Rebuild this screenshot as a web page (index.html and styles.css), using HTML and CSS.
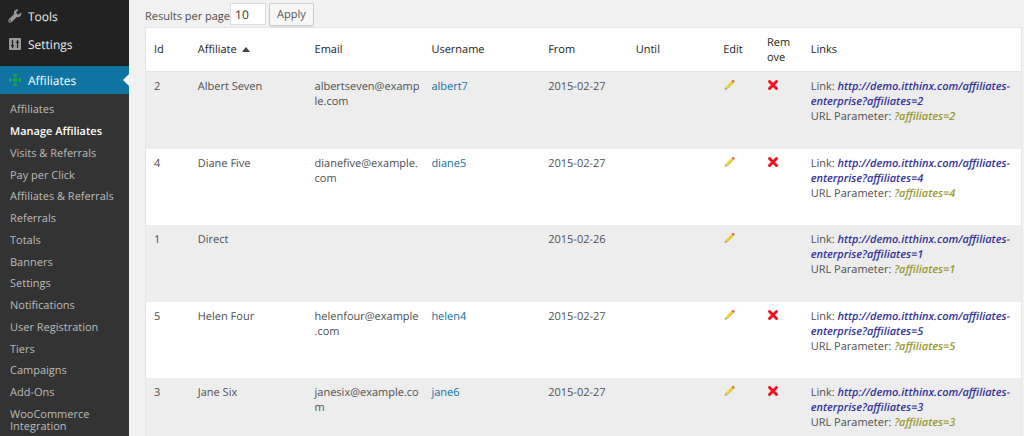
FILE: index.html
```html
<!DOCTYPE html>
<html lang="en">
<head>
    <meta charset="UTF-8">
    <meta name="viewport" content="width=device-width, initial-scale=1.0">
    <title>Manage Affiliates</title>
    <link rel="stylesheet" href="styles.css">
</head>
<body>
    <!-- shared icons -->
    <svg class="icon-defs" width="0" height="0" aria-hidden="true">
        <symbol id="icon-pencil" viewBox="0 0 12 12">
            <path d="M1.500 11l1-3 2 2z" fill="#a8a08c"/>
            <path d="M2.500 8l6-6 2 2-6 6z" fill="#ecd63a"/>
            <path d="M4 9.500l6-6 .5.500-6 6z" fill="#d9bd2c"/>
            <path d="M8.500 2l1-1h1l1 1v1l-1 1z" fill="#e8603c"/>
        </symbol>
        <symbol id="icon-remove" viewBox="0 0 12 12">
            <path d="M2.500 2.500l7 7M9.500 2.500l-7 7" stroke="#f5101f" stroke-width="3" stroke-linecap="round"/>
        </symbol>
    </svg>

    <div class="wrapper">
        <nav class="sidebar">
            <ul class="menu">
                <li>
                    <a href="#">
                        <svg class="menu-icon" viewBox="0 0 14 14"><path d="M13.200 3.300l-2.300 2.200-2-.5-.5-2L10.600.800C9.100.300 7.500.700 6.600 1.800c-.8 1-.9 2.200-.5 3.300L.900 10.300c-.8.800-.8 2 0 2.800s2 .8 2.800 0l5.200-5.200c1.100.4 2.400.2 3.300-.7 1.100-1 1.400-2.600 1-3.900zM2.300 12.500a.8.800 0 1 1 0-1.600.8.800 0 0 1 0 1.600z" fill="#999"/></svg>
                        Tools
                    </a>
                </li>
                <li>
                    <a href="#">
                        <svg class="menu-icon" viewBox="0 0 14 14"><rect x="1" y="1" width="12" height="12" rx="1" fill="#999"/><path d="M4.500 3v8M9.500 3v8" stroke="#222" stroke-width="1.200"/><path d="M2.500 8h4l-2 2.500zM7.500 6h4l-2-2.500z" fill="#222"/></svg>
                        Settings
                    </a>
                </li>
                <li class="current">
                    <a href="#">
                        <svg class="menu-icon" viewBox="0 0 14 14" fill="#16a34f"><rect x="5" y="5" width="4" height="4"/><path d="M5 1h4L8 4H6zM5 13h4l-1-3H6zM1 5l3 1v2L1 9zM13 5l-3 1v2l3 1z"/></svg>
                        Affiliates
                    </a>
                </li>
            </ul>
            <ul class="submenu">
                <li><a href="#">Affiliates</a></li>
                <li><a href="#" class="active">Manage Affiliates</a></li>
                <li><a href="#">Visits &amp; Referrals</a></li>
                <li><a href="#">Pay per Click</a></li>
                <li><a href="#">Affiliates &amp; Referrals</a></li>
                <li><a href="#">Referrals</a></li>
                <li><a href="#">Totals</a></li>
                <li><a href="#">Banners</a></li>
                <li><a href="#">Settings</a></li>
                <li><a href="#">Notifications</a></li>
                <li><a href="#">User Registration</a></li>
                <li><a href="#">Tiers</a></li>
                <li><a href="#">Campaigns</a></li>
                <li><a href="#">Add-Ons</a></li>
                <li><a href="#">WooCommerce Integration</a></li>
            </ul>
        </nav>

        <main class="content">
            <form class="per-page">
                <label for="row_count">Results per page</label>
                <input type="text" id="row_count" name="row_count" value="10">
                <button type="button">Apply</button>
            </form>

            <table class="affiliates">
                <thead>
                    <tr>
                        <th class="col-small">Id</th>
                        <th class="col-name">Affiliate <span class="sort-asc"></span></th>
                        <th class="col-name">Email</th>
                        <th class="col-name">Username</th>
                        <th class="col-date">From</th>
                        <th class="col-date">Until</th>
                        <th class="col-small">Edit</th>
                        <th class="col-small">Remove</th>
                        <th>Links</th>
                    </tr>
                </thead>
                <tbody>
                    <tr>
                        <td>2</td>
                        <td>Albert Seven</td>
                        <td>albertseven@example.com</td>
                        <td><a href="#">albert7</a></td>
                        <td>2015-02-27</td>
                        <td></td>
                        <td><a href="#" aria-label="Edit"><svg class="icon"><use href="#icon-pencil"/></svg></a></td>
                        <td><a href="#" aria-label="Remove"><svg class="icon"><use href="#icon-remove"/></svg></a></td>
                        <td>Link: <span class="link-url">http://demo.itthinx.com/affiliates-enterprise?affiliates=2</span><br>URL Parameter: <span class="link-param">?affiliates=2</span></td>
                    </tr>
                    <tr>
                        <td>4</td>
                        <td>Diane Five</td>
                        <td>dianefive@example.com</td>
                        <td><a href="#">diane5</a></td>
                        <td>2015-02-27</td>
                        <td></td>
                        <td><a href="#" aria-label="Edit"><svg class="icon"><use href="#icon-pencil"/></svg></a></td>
                        <td><a href="#" aria-label="Remove"><svg class="icon"><use href="#icon-remove"/></svg></a></td>
                        <td>Link: <span class="link-url">http://demo.itthinx.com/affiliates-enterprise?affiliates=4</span><br>URL Parameter: <span class="link-param">?affiliates=4</span></td>
                    </tr>
                    <tr>
                        <td>1</td>
                        <td>Direct</td>
                        <td></td>
                        <td></td>
                        <td>2015-02-26</td>
                        <td></td>
                        <td><a href="#" aria-label="Edit"><svg class="icon"><use href="#icon-pencil"/></svg></a></td>
                        <td></td>
                        <td>Link: <span class="link-url">http://demo.itthinx.com/affiliates-enterprise?affiliates=1</span><br>URL Parameter: <span class="link-param">?affiliates=1</span></td>
                    </tr>
                    <tr>
                        <td>5</td>
                        <td>Helen Four</td>
                        <td>helenfour@example.com</td>
                        <td><a href="#">helen4</a></td>
                        <td>2015-02-27</td>
                        <td></td>
                        <td><a href="#" aria-label="Edit"><svg class="icon"><use href="#icon-pencil"/></svg></a></td>
                        <td><a href="#" aria-label="Remove"><svg class="icon"><use href="#icon-remove"/></svg></a></td>
                        <td>Link: <span class="link-url">http://demo.itthinx.com/affiliates-enterprise?affiliates=5</span><br>URL Parameter: <span class="link-param">?affiliates=5</span></td>
                    </tr>
                    <tr>
                        <td>3</td>
                        <td>Jane Six</td>
                        <td>janesix@example.com</td>
                        <td><a href="#">jane6</a></td>
                        <td>2015-02-27</td>
                        <td></td>
                        <td><a href="#" aria-label="Edit"><svg class="icon"><use href="#icon-pencil"/></svg></a></td>
                        <td><a href="#" aria-label="Remove"><svg class="icon"><use href="#icon-remove"/></svg></a></td>
                        <td>Link: <span class="link-url">http://demo.itthinx.com/affiliates-enterprise?affiliates=3</span><br>URL Parameter: <span class="link-param">?affiliates=3</span></td>
                    </tr>
                </tbody>
            </table>
        </main>
    </div>
</body>
</html>
```

FILE: styles.css
```css
* {
    box-sizing: border-box;
}
body {
    margin: 0;
    font-family: "Open Sans", sans-serif;
    font-size: 11px;
    line-height: 15px;
    text-rendering: geometricPrecision;
    color: #4f4f4f;
    background: #f1f1f1;
    overflow-x: hidden;
    scrollbar-width: none;
}
.icon-defs {
    position: absolute;
}
.wrapper {
    display: flex;
    min-height: 100vh;
}

/* sidebar */
.sidebar {
    flex: none;
    width: 129px;
    background: #333;
}
.sidebar ul {
    list-style: none;
    margin: 0;
    padding: 0;
}
.sidebar a {
    text-decoration: none;
}
.sidebar .menu {
    background: #222;
    padding-top: 2px;
}
.menu a {
    display: flex;
    align-items: center;
    gap: 6px;
    height: 28px;
    padding-left: 8px;
    font-size: 12px;
    color: #eee;
}
.menu-icon {
    width: 14px;
    height: 14px;
}
.menu .current {
    position: relative;
    margin-top: 8px;
    background: #0f74a2;
}
.menu .current a {
    color: #fff;
}
/* arrow pointing at the menu from the content side */
.menu .current::after {
    content: "";
    position: absolute;
    right: 0;
    top: 8px;
    border: 6px solid transparent;
    border-left: 0;
    border-right-color: #f1f1f1;
}
.sidebar .submenu {
    padding: 5px 0;
}
.submenu li {
    padding: 5px 10px;
    line-height: 12px;
}
.submenu li:nth-child(4n) {
    padding-bottom: 4px;
}
.submenu a {
    color: #bbb;
}
.submenu .active {
    color: #fff;
    font-weight: 600;
}

/* content */
.content {
    flex: 1;
    min-width: 0;
    padding: 2px 2px 0 16px;
}
.per-page {
    display: flex;
    align-items: center;
    height: 24px;
    margin-bottom: 1px;
}
.per-page label {
    padding-top: 4px;
}
.per-page input {
    width: 36px;
    height: 22px;
    margin-right: 3px;
    padding: 0 4px;
    border: 1px solid #ddd;
    background: #fff;
    color: #333;
    font: inherit;
    font-size: 12px;
    text-rendering: inherit;
}
.per-page button {
    height: 23px;
    padding: 0 7px;
    border: 1px solid #ccc;
    border-radius: 2px;
    background: #f7f7f7;
    color: #555;
    font: inherit;
    text-rendering: inherit;
    box-shadow: 0 1px 0 rgba(0,0,0,0.08);
}
.affiliates {
    width: 100%;
    table-layout: fixed;
    border-collapse: separate;
    border-spacing: 0;
    border: 1px solid #e5e5e5;
    background: #fff;
}
.affiliates th,
.affiliates td {
    padding: 7px 3px 0 8px;
    text-align: left;
    vertical-align: top;
    word-wrap: break-word;
}
.affiliates th {
    height: 44px;
    padding: 0 8px;
    border-bottom: 1px solid #e5e5e5;
    vertical-align: middle;
    font-weight: normal;
    color: #222;
}
.affiliates tbody tr {
    height: 77px;
}
.affiliates tbody tr:nth-child(even) {
    height: 76px;
}
.affiliates tbody tr:nth-child(odd) {
    background: #ededed;
}
.affiliates td a {
    color: #0f74a2;
    text-decoration: none;
}
.col-small {
    width: 5%;
}
.col-name {
    width: 13.35%;
}
.col-date {
    width: 10%;
}
.sort-asc {
    display: inline-block;
    margin-left: 2px;
    vertical-align: 1px;
    border: 4px solid transparent;
    border-top: 0;
    border-bottom: 5px solid #444;
}
.icon {
    display: block;
    width: 12px;
    height: 12px;
}
.link-url {
    color: #333399;
    font-weight: 600;
    font-style: italic;
}
.link-param {
    color: #999933;
    font-weight: 600;
    font-style: italic;
}
```
